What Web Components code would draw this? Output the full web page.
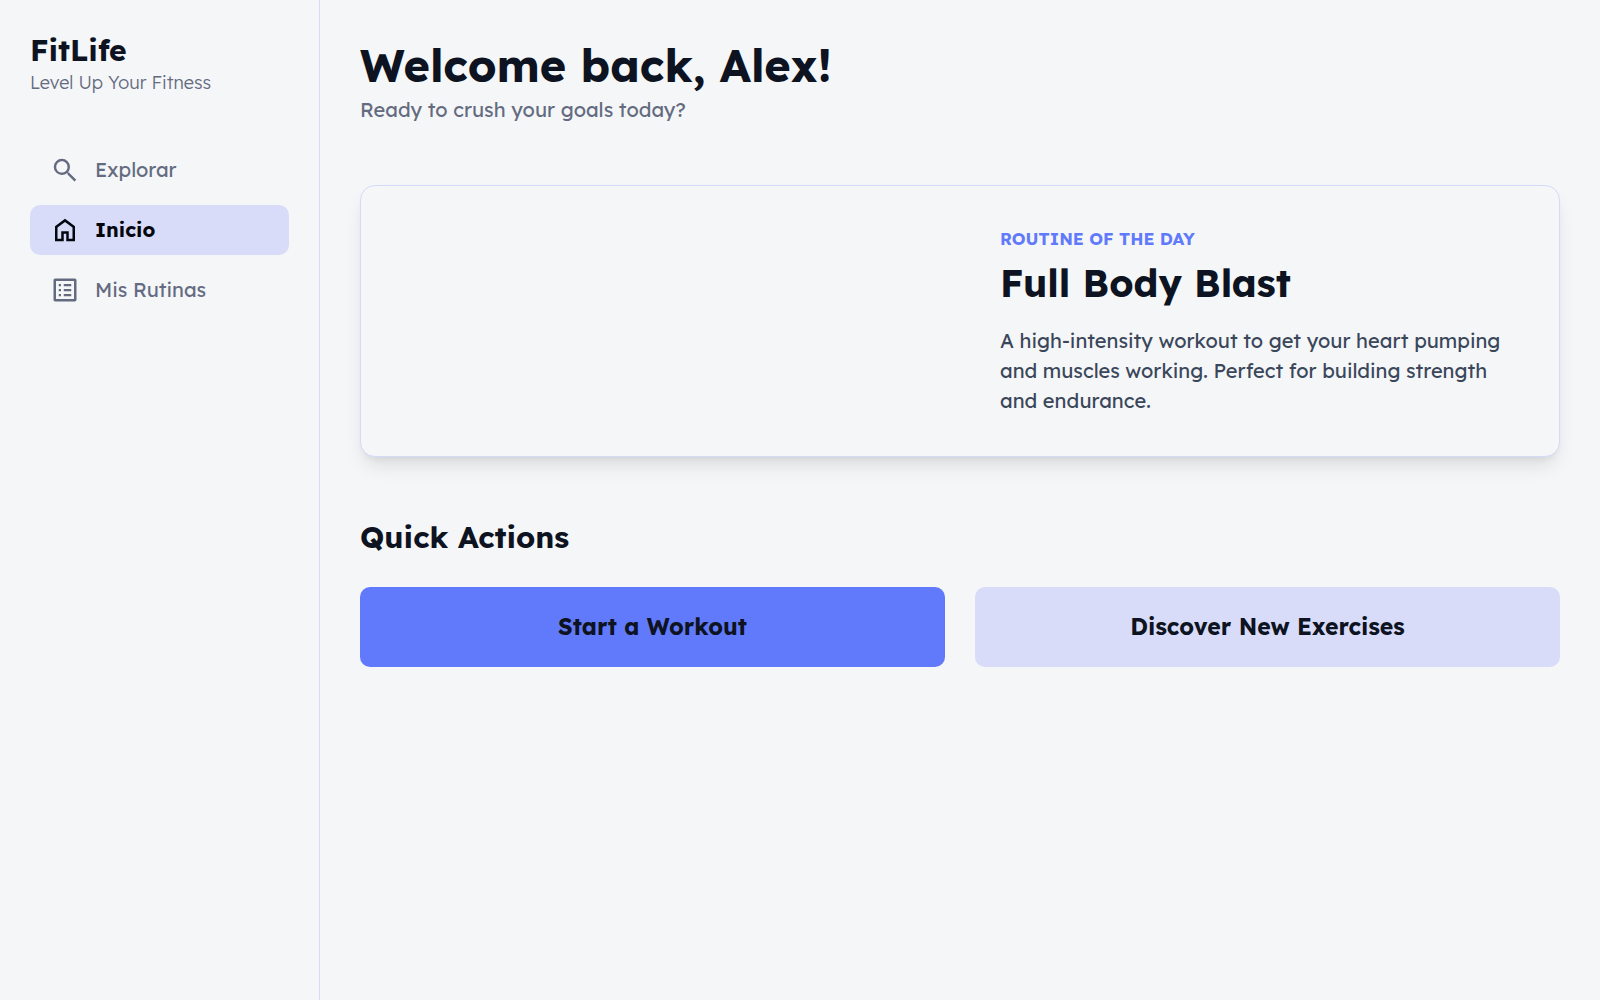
<!DOCTYPE html>
<html lang="en">
<head>
<meta charset="utf-8">
<meta name="viewport" content="width=device-width, initial-scale=1">
<title>FitLife</title>
<style>
:root{--bg:#f5f6f8;--ink:#0d1321;--muted:#646b80;--body:#3a475a;--primary:#607afb;--soft:#d8dcf9;--line:#d5daf9}
body{margin:0;background:var(--bg);color:var(--ink);font-family:Lexend,Inter,"Open Sans",sans-serif;font-size:20px;line-height:30px}
</style>
</head>
<body>
<fit-app></fit-app>
<script>
const define = (name, html) => customElements.define(name, class extends HTMLElement {
  constructor() {
    super();
    const t = document.createElement('template');
    t.innerHTML = html;
    this.attachShadow({mode: 'open'}).append(t.content.cloneNode(true));
  }
});

const icons = {
  search: '<path d="M15.5 14h-.79l-.28-.27A6.47 6.47 0 0 0 16 9.5 6.5 6.5 0 1 0 9.5 16c1.61 0 3.09-.59 4.23-1.57l.27.28v.79l5.6 5.6 1.4-1.4-5.5-5.3zm-6 0C7.01 14 5 11.99 5 9.5S7.01 5 9.5 5 14 7.01 14 9.5 11.99 14 9.5 14z"/>',
  home: '<path d="M6 19h3v-6h6v6h3v-9l-6-4.5L6 10v9zm-2 2V9l8-6 8 6v12h-7v-6h-2v6H4z"/>',
  list: '<path d="M19.2 4.8v14.4H4.8V4.8h14.4M19.8 2.8H4.2c-.8 0-1.4.6-1.4 1.4v15.6c0 .8.6 1.4 1.4 1.4h15.6c.8 0 1.4-.6 1.4-1.4V4.2c0-.8-.6-1.4-1.4-1.4zM11 7.2h6V9h-6V7.2zm0 4h6V13h-6v-1.8zm0 4h6V17h-6v-1.8zM7 7.2h1.8V9H7V7.2zm0 4h1.8V13H7v-1.8zm0 4h1.8V17H7v-1.8z"/>'
};

customElements.define('nav-item', class extends HTMLElement {
  connectedCallback() {
    const on = this.hasAttribute('active');
    this.attachShadow({mode: 'open'}).innerHTML = `
      <style>
        :host{display:block}
        a{display:flex;align-items:center;gap:15px;padding:10px 20px;border-radius:10px;color:var(--muted);text-decoration:none}
        a.on{background:var(--soft);color:#05070f;font-weight:700}
        svg{width:30px;height:30px;flex:none;fill:currentColor}
      </style>
      <a href="#" class="${on ? 'on' : ''}" ${on ? 'aria-current="page"' : ''}>
        <svg viewBox="0 0 24 24" aria-hidden="true">${icons[this.getAttribute('icon')]}</svg>
        <span><slot></slot></span>
      </a>`;
  }
});

define('side-bar', `
  <style>
    :host{display:flex;flex-direction:column;gap:50px;box-sizing:border-box;width:320px;flex:none;padding:30px;border-right:1px solid var(--line)}
    .name{margin:0;font-size:30px;line-height:40px;font-weight:700}
    .tag{margin:0;font-size:18px;line-height:25px;font-weight:300;color:var(--muted)}
    nav{display:flex;flex-direction:column;gap:10px}
  </style>
  <header><p class="name">FitLife</p><p class="tag">Level Up Your Fitness</p></header>
  <nav>
    <nav-item icon="search">Explorar</nav-item>
    <nav-item icon="home" active>Inicio</nav-item>
    <nav-item icon="list">Mis Rutinas</nav-item>
  </nav>`);

define('routine-card', `
  <style>
    :host{display:grid;grid-template-columns:1fr 1fr;border:1px solid var(--line);border-radius:15px;background:var(--bg);box-shadow:0 12px 19px -4px rgba(0,0,0,.1),0 5px 8px -5px rgba(0,0,0,.1)}
    .text{padding:40px}
    .label{display:block;font-size:17px;line-height:25px;font-weight:700;color:var(--primary);text-transform:uppercase}
    .title{display:block;margin:10px 0 20px;font-size:38px;line-height:45px;font-weight:700}
    .desc{display:block;color:var(--body)}
    ::slotted(*){margin:0;font:inherit}
  </style>
  <div class="picture"></div>
  <div class="text">
    <slot class="label" name="label"></slot>
    <slot class="title" name="title"></slot>
    <slot class="desc"></slot>
  </div>`);

define('action-button', `
  <style>
    :host{display:block;flex:1}
    button{display:block;width:100%;padding:25px;border:0;border-radius:10px;background:var(--fill,var(--soft));color:var(--ink);font:inherit;font-size:23px;font-weight:700;cursor:pointer}
    :host([primary]){--fill:var(--primary)}
  </style>
  <button type="button"><slot></slot></button>`);

define('fit-app', `
  <style>
    :host{display:flex;min-height:100vh}
    main{flex:1;padding:40px;display:flex;flex-direction:column;gap:60px;min-width:0}
    h1{margin:0 0 5px;font-size:45px;line-height:50px;font-weight:700}
    header p{margin:0;color:var(--muted)}
    section h2{margin:0 0 30px;font-size:30px;line-height:40px;font-weight:700}
    .actions{display:flex;gap:30px}
  </style>
  <side-bar></side-bar>
  <main>
    <header><h1>Welcome back, Alex!</h1><p>Ready to crush your goals today?</p></header>
    <routine-card>
      <p slot="label">Routine of the day</p>
      <h2 slot="title">Full Body Blast</h2>
      <p>A high-intensity workout to get your heart pumping and muscles working. Perfect for building strength and endurance.</p>
    </routine-card>
    <section>
      <h2>Quick Actions</h2>
      <div class="actions">
        <action-button primary>Start a Workout</action-button>
        <action-button>Discover New Exercises</action-button>
      </div>
    </section>
  </main>`);
</script>
</body>
</html>
